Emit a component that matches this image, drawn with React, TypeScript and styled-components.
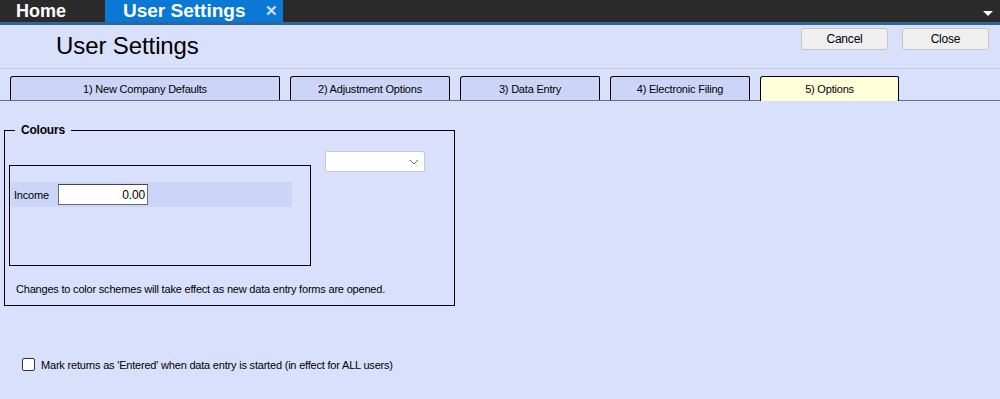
import React from "react";
import styled, { createGlobalStyle } from "styled-components";

const Global = createGlobalStyle`
  html, body { margin: 0; padding: 0; }
  body {
    background: #d9e0fb;
    font-family: "Liberation Sans", Arial, sans-serif;
    font-size: 11px;
    color: #000;
    width: 1000px;
    height: 399px;
    overflow: hidden;
  }
`;

const Page = styled.div`
  width: 1000px;
  height: 399px;
  display: flex;
  flex-direction: column;
  background: #d9e0fb;
  letter-spacing: -0.2px;
`;

const TopBar = styled.div`
  height: 22px;
  background: #2b2b2b;
  border-bottom: 3px solid #2c6899;
  display: flex;
  align-items: stretch;
  position: relative;
  letter-spacing: 0;
`;

const DocTab = styled.div<{ $active?: boolean }>`
  display: flex;
  align-items: center;
  gap: 20px;
  padding: 0 0 0 ${(p) => (p.$active ? 18 : 16)}px;
  width: ${(p) => (p.$active ? 160 : 89)}px;
  background: ${(p) => (p.$active ? "#0a78d4" : "transparent")};
  color: #fff;
  font-weight: bold;
  font-size: ${(p) => (p.$active ? 19 : 18)}px;
  font-family: "Liberation Sans", Arial, sans-serif;
`;

const CloseX = styled.span`
  font-size: 15px;
  color: #cfe3f7;
  font-weight: bold;
`;

const MenuArrow = styled.div`
  position: absolute;
  right: 7px;
  top: 11px;
  width: 0;
  height: 0;
  border-left: 5px solid transparent;
  border-right: 5px solid transparent;
  border-top: 5px solid #ffffff;
`;

const Header = styled.div`
  height: 43px;
  display: flex;
  align-items: flex-start;
  border-bottom: 1px solid #c4c9dd;
`;

const Title = styled.h1`
  margin: 7px 0 0 56px;
  font-size: 24px;
  font-weight: normal;
  letter-spacing: -0.1px;
  font-family: "Liberation Sans", Arial, sans-serif;
  flex: 1;
`;

const Buttons = styled.div`
  display: flex;
  gap: 14px;
  margin: 3px 11px 0 0;
`;

const Button = styled.button`
  width: 87px;
  height: 22px;
  background: #efefef;
  border: 1px solid #c6c6c6;
  border-radius: 3px;
  font-family: "Liberation Sans", Arial, sans-serif;
  font-size: 12px;
  letter-spacing: -0.2px;
  color: #000;
  padding: 0;
`;

const TabStrip = styled.div`
  margin-top: 7px;
  height: 24px;
  display: flex;
  align-items: flex-end;
  gap: 10px;
  padding-left: 10px;
  border-bottom: 1px solid #6b6d7c;
`;

const Tab = styled.div<{ $w: number; $active?: boolean }>`
  width: ${(p) => p.$w}px;
  height: ${(p) => (p.$active ? 25 : 24)}px;
  box-sizing: border-box;
  border: 1px solid #000;
  border-bottom: none;
  border-radius: 3px 2px 0 0;
  background: ${(p) => (p.$active ? "#ffffdc" : "#ccd5f8")};
  display: flex;
  align-items: center;
  justify-content: center;
  padding-top: ${(p) => (p.$active ? 0 : 1)}px;
  font-size: 11px;
  margin-bottom: ${(p) => (p.$active ? -1 : 0)}px;
`;

const Content = styled.div`
  padding: 22px 0 0 4px;
  display: flex;
  flex-direction: column;
`;

const Group = styled.fieldset`
  width: 451px;
  box-sizing: border-box;
  margin: 0;
  padding: 0 0 9px 0;
  border: 1px solid #000;
  display: flex;
  flex-direction: column;
`;

const Legend = styled.legend`
  margin-left: 10px;
  padding: 0 6px;
  font-weight: bold;
  font-size: 12px;
  letter-spacing: -0.2px;
`;

const GroupBody = styled.div`
  display: flex;
  align-items: flex-start;
  padding: 14px 0 0 4px;
  gap: 14px;
`;

const InnerBox = styled.div`
  width: 302px;
  height: 101px;
  box-sizing: border-box;
  border: 1px solid #000;
  margin-top: 14px;
  padding: 16px 18px 0 1px;
`;

const Band = styled.div`
  height: 25px;
  background: #ccd5f8;
  display: flex;
  align-items: center;
  gap: 9px;
  padding-left: 3px;
`;

const Input = styled.div`
  width: 90px;
  height: 21px;
  box-sizing: border-box;
  background: #fff;
  border: 1px solid #6c6c6c;
  border-top-color: #444;
  display: flex;
  align-items: center;
  justify-content: flex-end;
  padding-right: 2px;
  font-size: 12px;
`;

const Select = styled.div`
  width: 100px;
  height: 21px;
  box-sizing: border-box;
  background: #fff;
  border: 1px solid #c8c8c8;
  border-radius: 2px;
  display: flex;
  align-items: center;
  justify-content: flex-end;
  padding-right: 5px;
`;

const Note = styled.div`
  margin: 17px 0 0 11px;
  font-size: 11px;
  line-height: 13px;
`;

const CheckRow = styled.label`
  display: flex;
  align-items: center;
  gap: 6px;
  margin: 52px 0 0 18px;
  font-size: 11px;
`;

const Box = styled.span`
  width: 11px;
  height: 11px;
  border: 1px solid #333;
  border-radius: 2px;
  background: #fff;
  display: inline-block;
`;

export default function App() {
  return (
    <Page>
      <Global />
      <TopBar>
        <DocTab>Home</DocTab>
        <DocTab $active>
          User Settings <CloseX>✕</CloseX>
        </DocTab>
        <MenuArrow />
      </TopBar>
      <Header>
        <Title>User Settings</Title>
        <Buttons>
          <Button>Cancel</Button>
          <Button>Close</Button>
        </Buttons>
      </Header>
      <TabStrip>
        <Tab $w={270}>1) New Company Defaults</Tab>
        <Tab $w={160}>2) Adjustment Options</Tab>
        <Tab $w={140}>3) Data Entry</Tab>
        <Tab $w={140}>4) Electronic Filing</Tab>
        <Tab $w={139} $active>5) Options</Tab>
      </TabStrip>
      <Content>
        <Group>
          <Legend>Colours</Legend>
          <GroupBody>
            <InnerBox>
              <Band>
                Income
                <Input>0.00</Input>
              </Band>
            </InnerBox>
            <Select>
              <svg width="10" height="6" viewBox="0 0 10 6">
                <path d="M1 1 L5 5 L9 1" fill="none" stroke="#666" strokeWidth="1" />
              </svg>
            </Select>
          </GroupBody>
          <Note>Changes to color schemes will take effect as new data entry forms are opened.</Note>
        </Group>
        <CheckRow>
          <Box />
          Mark returns as 'Entered' when data entry is started (in effect for ALL users)
        </CheckRow>
      </Content>
    </Page>
  );
}
